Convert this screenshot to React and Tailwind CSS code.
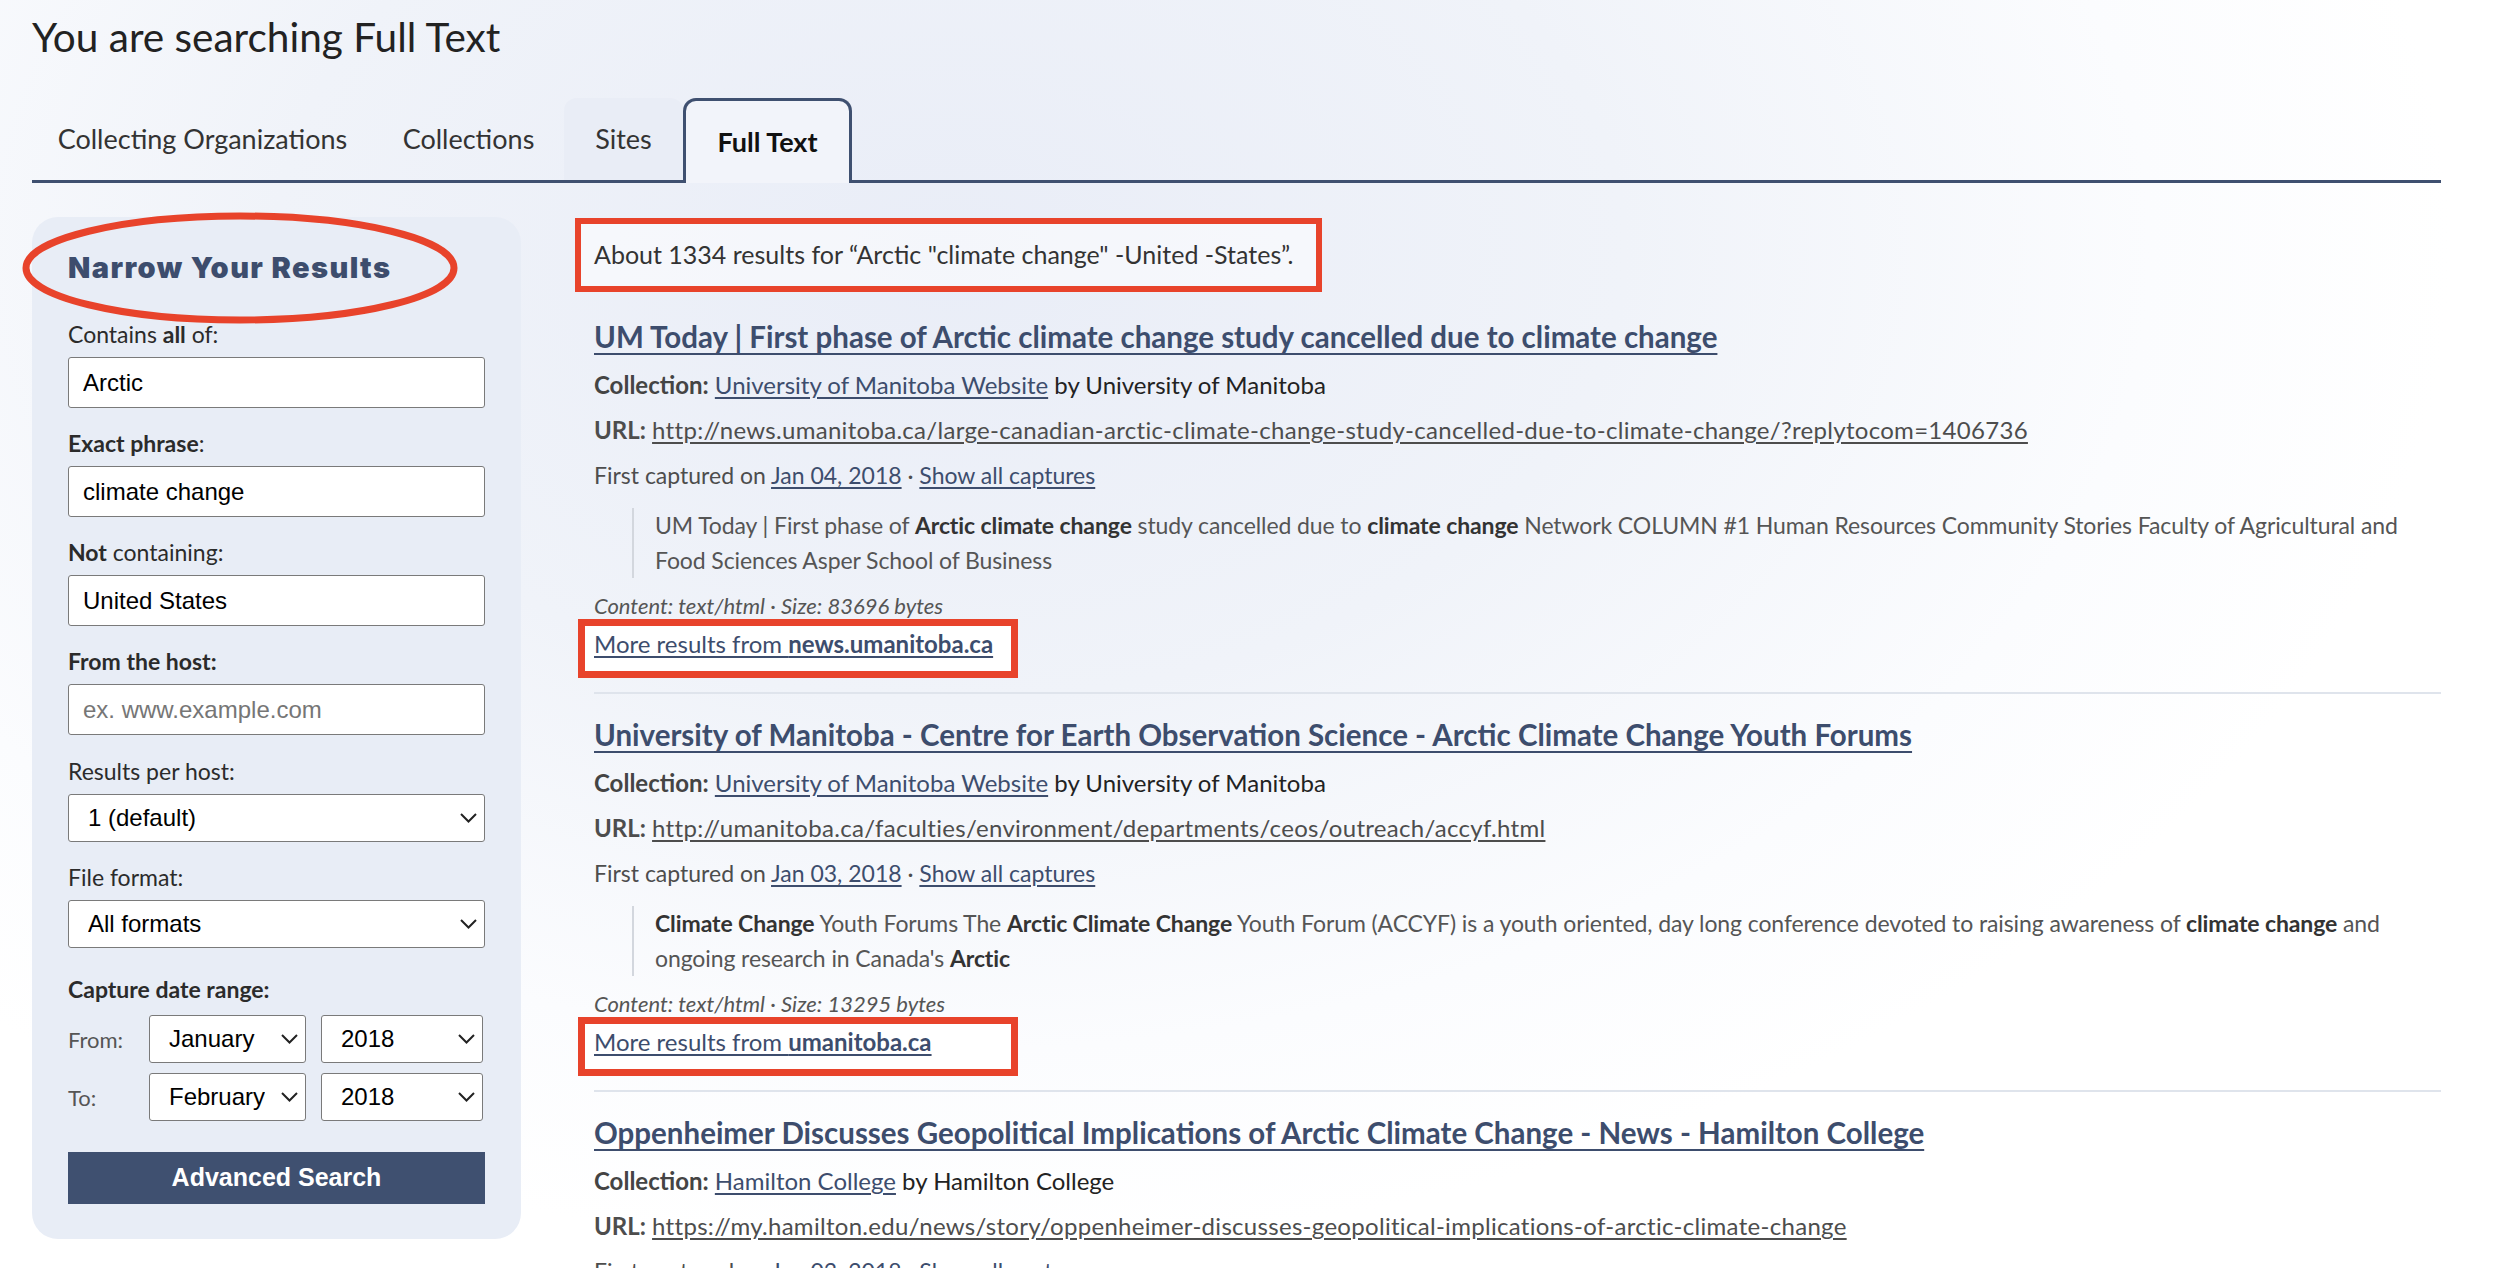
import React from "react";

function Chevron() {
  return (
    <svg className="pointer-events-none absolute right-[8px] top-1/2 -translate-y-1/2 h-[10px] w-[17px]" viewBox="0 0 17 10">
      <path d="M1 1l7.5 7.5L16 1" fill="none" stroke="#222" strokeWidth="2" />
    </svg>
  );
}

function Select({ value, className = "" }) {
  return (
    <div className={"relative " + className}>
      <select
        defaultValue={value}
        className="block w-full h-[48px] appearance-none rounded-[3px] border-[1.5px] border-[#7a7a7a] bg-white pl-[19px] pr-10 font-['Liberation_Sans',Arial,sans-serif] text-[24px] text-black"
      >
        <option>{value}</option>
      </select>
      <Chevron />
    </div>
  );
}

function Field({ label, children, gap = "mb-[20px]" }) {
  return (
    <div className={gap}>
      <div className="text-[23px] leading-[30px] mb-[8px] text-[#2b2b2b]">{label}</div>
      {children}
    </div>
  );
}

function TextInput({ value, placeholder }) {
  return (
    <input
      defaultValue={value}
      placeholder={placeholder}
      className="block w-full h-[51px] rounded-[3px] border-[1.5px] border-[#7a7a7a] bg-white px-[14px] font-['Liberation_Sans',Arial,sans-serif] text-[24px] text-black placeholder:text-[#767676]"
    />
  );
}

function Sidebar() {
  return (
    <aside className="relative w-[489px] shrink-0 rounded-[26px] bg-[#e8edf6] px-9 pt-[31px] pb-[35px]">
      <svg className="pointer-events-none absolute left-[-12px] top-[-6px] h-[114px] w-[440px]" viewBox="0 0 440 114">
        <ellipse cx="220" cy="57" rx="214" ry="52" fill="none" stroke="#e8432b" strokeWidth="7" />
      </svg>
      <h2 className="font-['Inter',sans-serif] font-black text-[29px] leading-[40px] tracking-[1.4px] text-[#3d4d6d] mb-[31px]">
        Narrow Your Results
      </h2>

      <Field label={<>Contains <b>all</b> of:</>}>
        <TextInput value="Arctic" />
      </Field>
      <Field label={<><b>Exact phrase</b>:</>}>
        <TextInput value="climate change" />
      </Field>
      <Field label={<><b>Not</b> containing:</>}>
        <TextInput value="United States" />
      </Field>
      <Field label={<b>From the host:</b>} gap="mb-[21px]">
        <TextInput placeholder="ex. www.example.com" />
      </Field>
      <Field label="Results per host:">
        <Select value="1 (default)" />
      </Field>
      <Field label="File format:" gap="">
        <Select value="All formats" />
      </Field>

      <div className="mt-[26px] text-[23px] leading-[30px] font-bold text-[#2b2b2b]">Capture date range:</div>
      <div className="mt-[11px] flex items-center">
        <span className="w-[81px] text-[22px] text-[#555]">From:</span>
        <Select value="January" className="w-[157px]" />
        <Select value="2018" className="w-[162px] ml-[15px]" />
      </div>
      <div className="mt-[10px] flex items-center">
        <span className="w-[81px] text-[22px] text-[#555]">To:</span>
        <Select value="February" className="w-[157px]" />
        <Select value="2018" className="w-[162px] ml-[15px]" />
      </div>

      <button className="mt-[31px] block h-[52px] w-full bg-[#3f5070] font-['Liberation_Sans',Arial,sans-serif] text-[25px] font-bold text-white">
        Advanced Search
      </button>
    </aside>
  );
}

function Result({ title, collection, by, url, date, summary, content, host, last }) {
  return (
    <div className={last ? "" : "border-b-2 border-[#dfe4ec] pb-[14px] mb-[21px]"}>
      <a href="#" className="block text-[29.5px] leading-[40px] font-bold text-[#3d4d6d] underline decoration-2 underline-offset-[5px] whitespace-nowrap">
        {title}
      </a>
      <div className="mt-[10px] text-[24px] leading-[36px] text-[#222]">
        <b className="text-[#444]">Collection:</b>{" "}
        <a href="#" className="text-[#3d4d6d] underline underline-offset-[3px]">{collection}</a> by {by}
      </div>
      <div className="mt-[9px] text-[24px] leading-[36px] text-[#4d4d4d] whitespace-nowrap">
        <b>URL:</b>{" "}
        <a href="#" className="underline underline-offset-[3px] tracking-[0.3px]">{url}</a>
      </div>
      <div className="mt-[9px] text-[23px] leading-[36px] text-[#4d4d4d]">
        First captured on{" "}
        <a href="#" className="text-[#3d4d6d] underline underline-offset-[3px]">{date}</a> ·{" "}
        <a href="#" className="text-[#3d4d6d] underline underline-offset-[3px]">Show all captures</a>
      </div>
      {summary && (
        <>
          <blockquote className="mt-[15px] ml-[38px] border-l-2 border-[#d3d7de] pl-[21px] text-[23px] leading-[35px] tracking-[-0.1px] text-[#555]">
            {summary}
          </blockquote>
          <div className="mt-[15px] text-[22px] leading-[26px] italic text-[#555]">{content}</div>
          <div className="-ml-[16px] h-[59px] w-[440px] border-[7px] border-[#e8432b] bg-white pl-[9px] pt-[2px]">
            <a href="#" className="text-[24px] leading-[32px] text-[#3d4d6d] underline underline-offset-[3px] whitespace-nowrap">
              More results from <b>{host}</b>
            </a>
          </div>
        </>
      )}
    </div>
  );
}

export default function App() {
  return (
    <div className="min-h-screen w-full overflow-hidden bg-[radial-gradient(ellipse_1500px_1000px_at_950px_250px,#e9edf7_0%,#f0f3f9_45%,#fbfcfe_80%,#ffffff_100%)] font-['Lato',sans-serif] text-[#2b2b2b]">
      <div className="w-[2409px] ml-[32px] pt-[13px]">
        <h1 className="text-[40.5px] leading-[48px] text-[#222]">You are searching Full Text</h1>

        <nav className="mt-[37px] flex items-end border-b-[3px] border-[#3f5070] text-[27px] text-[#333]">
          <div className="flex h-[82px] w-[341px] items-center justify-center">Collecting Organizations</div>
          <div className="flex h-[82px] w-[191px] items-center justify-center">Collections</div>
          <div className="flex h-[82px] w-[119px] items-center justify-center rounded-t-[13px] bg-[#e9edf6]">Sites</div>
          <div className="relative z-10 -mb-[3px] flex h-[85px] w-[169px] items-center justify-center rounded-t-[13px] border-[3px] border-b-0 border-[#3f5070] bg-[#f2f4fa] font-bold text-[#111]">
            Full Text
          </div>
        </nav>

        <div className="mt-[34px] flex items-start">
          <Sidebar />

          <main className="ml-[73px] min-w-0 flex-1">
            <div className="-ml-[19px] mt-[1px] flex h-[74px] w-[747px] items-center border-[6px] border-[#e8432b] bg-white/50 pl-[13px] text-[25px] text-[#333] whitespace-nowrap">
              About 1334 results for “Arctic "climate change" -United -States”.
            </div>

            <div className="mt-[25px]">
              <Result
                title="UM Today | First phase of Arctic climate change study cancelled due to climate change"
                collection="University of Manitoba Website"
                by="University of Manitoba"
                url="http://news.umanitoba.ca/large-canadian-arctic-climate-change-study-cancelled-due-to-climate-change/?replytocom=1406736"
                date="Jan 04, 2018"
                summary={
                  <>
                    UM Today | First phase of <b className="text-[#333]">Arctic climate change</b> study cancelled due to{" "}
                    <b className="text-[#333]">climate change</b> Network COLUMN #1 Human Resources Community Stories Faculty of
                    Agricultural and Food Sciences Asper School of Business
                  </>
                }
                content="Content: text/html · Size: 83696 bytes"
                host="news.umanitoba.ca"
              />
              <Result
                title="University of Manitoba - Centre for Earth Observation Science - Arctic Climate Change Youth Forums"
                collection="University of Manitoba Website"
                by="University of Manitoba"
                url="http://umanitoba.ca/faculties/environment/departments/ceos/outreach/accyf.html"
                date="Jan 03, 2018"
                summary={
                  <>
                    <b className="text-[#333]">Climate Change</b> Youth Forums The <b className="text-[#333]">Arctic Climate Change</b>{" "}
                    Youth Forum (ACCYF) is a youth oriented, day long conference devoted to raising awareness of{" "}
                    <b className="text-[#333]">climate change</b> and ongoing research in Canada's <b className="text-[#333]">Arctic</b>
                  </>
                }
                content="Content: text/html · Size: 13295 bytes"
                host="umanitoba.ca"
              />
              <Result
                last
                title="Oppenheimer Discusses Geopolitical Implications of Arctic Climate Change - News - Hamilton College"
                collection="Hamilton College"
                by="Hamilton College"
                url="https://my.hamilton.edu/news/story/oppenheimer-discusses-geopolitical-implications-of-arctic-climate-change"
                date="Jan 03, 2018"
              />
            </div>
          </main>
        </div>
      </div>
    </div>
  );
}
